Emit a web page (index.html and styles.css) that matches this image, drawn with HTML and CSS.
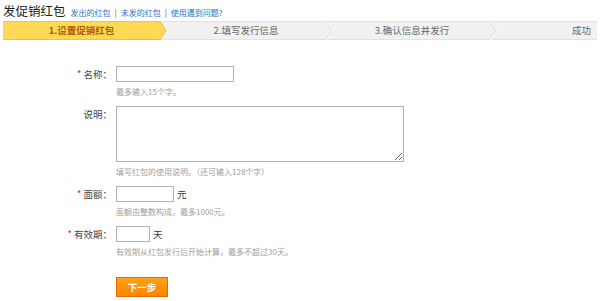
FILE: index.html
```html
<!DOCTYPE html>
<html lang="zh-CN">
<head>
  <meta charset="UTF-8" />
  <title>发促销红包</title>
  <link rel="stylesheet" href="styles.css">
</head>
<body>
  <div class="top">
    <h1>发促销红包</h1>
    <div class="links">
      <a href="#">发出的红包</a><span class="sep">|</span><a href="#">未发的红包</a><span class="sep">|</span><a href="#">使用遇到问题?</a>
    </div>
  </div>

  <div class="steps">
    <div class="step current">1.设置促销红包</div>
    <svg class="arrow" width="7" height="19" viewBox="0 0 7 19"><polygon points="0,0 0.5,0 6.5,9.5 0.5,19 0,19" fill="#fed955"/><polyline points="0,0.5 6,9.5 0,18.5" fill="none" stroke="#f4bf43" stroke-width="1"/></svg>
    <div class="step s2">2.填写发行信息</div>
    <svg class="chev" width="10" height="19" viewBox="0 0 10 19"><polyline points="1,0 8,9.5 1,19" fill="none" stroke="#fff" stroke-width="1.2"/><polyline points="0,0 7,9.5 0,19" fill="none" stroke="#d8d8d8" stroke-width="1"/></svg>
    <div class="step s3">3.确认信息并发行</div>
    <svg class="chev" width="10" height="19" viewBox="0 0 10 19"><polyline points="1,0 8,9.5 1,19" fill="none" stroke="#fff" stroke-width="1.2"/><polyline points="0,0 7,9.5 0,19" fill="none" stroke="#d8d8d8" stroke-width="1"/></svg>
    <div class="step s4">成功</div>
  </div>

  <form class="form">
    <div class="row">
      <label class="lbl"><em>*</em> 名称：</label>
      <div class="field">
        <input type="text" class="ipt name">
        <p class="hint">最多输入15个字。</p>
      </div>
    </div>
    <div class="row">
      <label class="lbl">说明：</label>
      <div class="field">
        <textarea class="ta"></textarea>
        <p class="hint">填写红包的使用说明。（还可输入128个字）</p>
      </div>
    </div>
    <div class="row">
      <label class="lbl"><em>*</em> 面额：</label>
      <div class="field">
        <div class="line"><input type="text" class="ipt money"><span class="unit">元</span></div>
        <p class="hint">面额由整数构成，最多1000元。</p>
      </div>
    </div>
    <div class="row">
      <label class="lbl"><em>*</em> 有效期：</label>
      <div class="field">
        <div class="line"><input type="text" class="ipt days"><span class="unit">天</span></div>
        <p class="hint">有效期从红包发行后开始计算，最多不超过30天。</p>
      </div>
    </div>
    <div class="row">
      <div class="lbl"></div>
      <div class="field"><button type="button" class="btn">下一步</button></div>
    </div>
  </form>
</body>
</html>
```

FILE: styles.css
```css
* { box-sizing: border-box; margin: 0; padding: 0; }
body { font-family: "Noto Sans CJK SC", "Liberation Sans", sans-serif; color: #333; background: #fff; width: 600px; }
.top { display: flex; align-items: baseline; padding: 3px 0 0 3px; height: 21px; }
.top h1 { font-size: 12.5px; font-weight: normal; line-height: 16px; color: #222; }
.links { font-size: 8px; margin-left: 5px; color: #999; }
.links a { color: #2a6fc9; text-decoration: none; }
.links .sep { margin: 0 4px; color: #555; }

.steps { display: flex; margin: 0 3px; height: 19px; background: #f1f1f1; border-top: 1px solid #e2e2e2; border-bottom: 1px solid #e2e2e2; }
.step { font-size: 9.5px; line-height: 17px; color: #666; text-align: center; }
.step.current { width: 157px; background: #fed955; color: #b35a00; font-weight: bold; margin: -1px 0; border-top: 1px solid #f4bf43; border-bottom: 1px solid #f4bf43; line-height: 17px; }
.arrow { flex: none; margin: -1px 0; }
.chev { flex: none; margin: -1px 0; }
.s2 { width: 158px; }
.s3 { width: 154px; }
.s4 { flex: 1; text-align: right; padding-right: 6px; }

.form { padding-top: 26px; }
.row { display: flex; margin-bottom: 8px; }
.lbl { width: 112px; text-align: right; font-size: 9.5px; line-height: 16px; color: #444; margin-right: 4px; flex: none; }
.lbl em { font-style: normal; color: #e02020; }
.ipt { height: 16px; border: 1px solid #b0b0b0; display: block; background: #fff; }
.name { width: 118px; }
.money { width: 58px; }
.days { width: 34px; }
.ta { display: block; width: 288px; height: 56px; border: 1px solid #b0b0b0; }
.line { display: flex; align-items: center; }
.unit { font-size: 9.5px; margin-left: 3px; color: #333; }
.hint { font-size: 8px; line-height: 12px; margin-top: 4px; color: #a0a0a0; }
.btn { margin-top: 11px; width: 52px; height: 20px; border: 1px solid #e36d00; background: linear-gradient(#ffa11a, #ff8500); color: #fff; font-weight: bold; font-size: 9.5px; font-family: inherit; }
```
